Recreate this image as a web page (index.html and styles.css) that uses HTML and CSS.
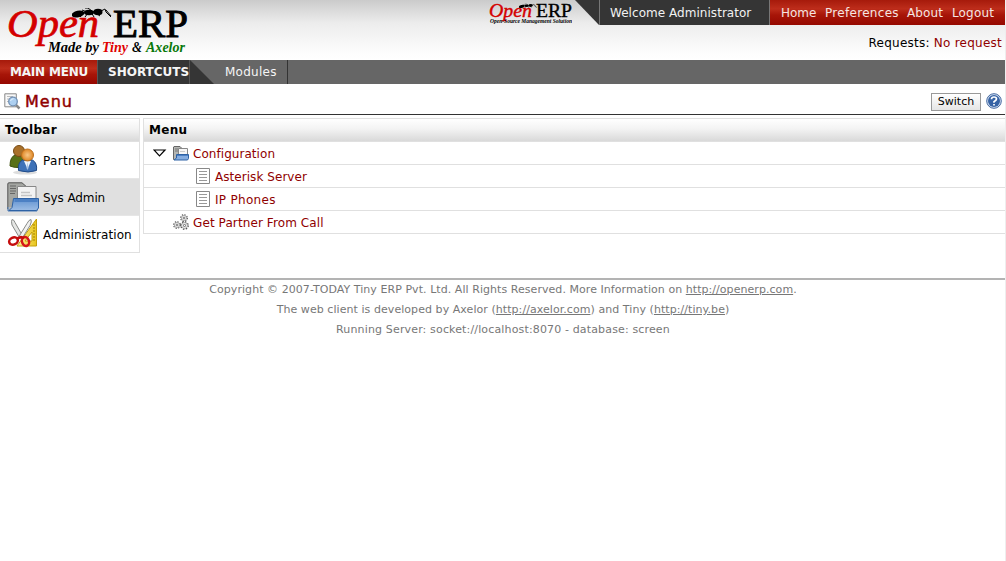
FILE: index.html
```
<!DOCTYPE html>
<html lang="en">
<head>
<meta charset="utf-8">
<title>Menu</title>
<link rel="stylesheet" href="styles.css">
</head>
<body>
<svg class="defs" width="0" height="0" aria-hidden="true">
  <defs>
    <linearGradient id="blue" x1="0" y1="0" x2="0" y2="1"><stop offset="0" stop-color="#5f91d0"/><stop offset="1" stop-color="#9dbde5"/></linearGradient>
    <radialGradient id="orange"><stop offset="0" stop-color="#f9c987"/><stop offset="1" stop-color="#dd8625"/></radialGradient>
    <linearGradient id="yellow"><stop offset="0" stop-color="#fff0a0"/><stop offset="1" stop-color="#e8c51b"/></linearGradient>
    <symbol id="ant" viewBox="0 0 40 10">
      <ellipse cx="6" cy="6" rx="6.500" ry="3.300" transform="rotate(-12 6 6)"/>
      <ellipse cx="17" cy="4.500" rx="5" ry="2.700"/><ellipse cx="26" cy="4" rx="4.500" ry="3.200"/>
      <path d="M12 5 8 9M16 5l-3 4M19 4l3 5M21 3l7 5M15 4l-5-2M20 3l-4-3h-3M29 3l4-2 1 3 5 5M34 2l5 6" fill="none" stroke="#000" stroke-width="1"/>
    </symbol>
    <symbol id="folder" viewBox="0 0 32 30">
      <path d="M.8 27V2q0-1.200 1.200-1.200H15l4 3.500V27z" fill="#a4a6a2" stroke="#555"/>
      <path d="M3 4h6M3 6.500h6M3 9h6M3 11.500h5" stroke="#666"/>
      <path d="M10.500 20V4.500H29V20z" fill="#f3f3f3" stroke="#888"/>
      <path d="M14 10.500h9M14 13.500h11" stroke="#c4c4c4" stroke-width="1.500"/>
      <path d="M1 25v4h29l1-5" fill="#b5b8b8" stroke="#4777b2"/>
      <path d="M6.500 16.500h25V26l-2 2.500H2l3-3z" fill="url(#blue)" stroke="#2e62a5"/>
      <path d="M7.500 18.500h23" stroke="#4c80c4" stroke-width="3"/>
    </symbol>
    <symbol id="folder-small" viewBox="0 0 16 15">
      <path d="M.5 13.500V1L1 .500h6l2 2v11z" fill="#b4b6b3" stroke="#666"/>
      <path d="M2 3h3M2 5h3" stroke="#777"/>
      <path d="M5.500 9V2.500h9V9z" fill="#f6f6f6" stroke="#888"/>
      <path d="M7 5.500h5" stroke="#ccc"/>
      <path d="M3.500 8.500h12v4l-1 1.500H1l2.500-2z" fill="#86ade0" stroke="#2e62a5"/>
      <path d="M4 9.500h11" stroke="#4c80c4"/>
    </symbol>
    <symbol id="sheet" viewBox="0 0 14 16">
      <path d="M.5.500h13v15H.5z" fill="#fff" stroke="#888"/>
      <path d="M3 3.500h8M3 6.500h8M3 9.500h8M3 12.500h8" stroke="#999"/>
    </symbol>
    <symbol id="gear" viewBox="0 0 8 8">
      <circle cx="4" cy="4" r="3.300" fill="none" stroke="#444" stroke-width="1.100" stroke-dasharray="1.300 1.290"/>
      <circle cx="4" cy="4" r="2.600" fill="#fff" stroke="#777" stroke-width=".6"/>
      <circle cx="4" cy="4" r="1" fill="#fff" stroke="#444" stroke-width=".7"/>
    </symbol>
  </defs>
</svg>

<header class="header">
  <svg class="logo" width="190" height="60">
    <text class="logo-red" x="7" y="37" font-size="41" textLength="92" lengthAdjust="spacingAndGlyphs">Open</text>
    <text class="logo-erp" x="113" y="37" font-size="41" textLength="75" lengthAdjust="spacingAndGlyphs">ERP</text>
    <use href="#ant" x="72" y="8" width="40" height="10"/>
    <g class="logo-line" font-size="14">
      <text x="48" y="52" textLength="51" lengthAdjust="spacingAndGlyphs">Made by</text>
      <text x="102" y="52" fill="#e00000" textLength="26" lengthAdjust="spacingAndGlyphs">Tiny</text>
      <text x="132" y="52" textLength="10" lengthAdjust="spacingAndGlyphs">&amp;</text>
      <text x="146" y="52" fill="#087808" textLength="39" lengthAdjust="spacingAndGlyphs">Axelor</text>
    </g>
  </svg>
  <div class="header-right">
    <div class="userbar">
      <svg class="mini-logo" width="86" height="25">
        <text class="logo-red" x="3" y="17" font-size="19.500" textLength="43" lengthAdjust="spacingAndGlyphs">Open</text>
        <text class="logo-erp" x="50" y="17" font-size="19.500" textLength="36" lengthAdjust="spacingAndGlyphs">ERP</text>
        <use href="#ant" x="33" y="3.500" width="18" height="5"/>
        <text class="logo-line" x="4" y="22.500" font-size="5.500" textLength="82" lengthAdjust="spacingAndGlyphs">Open-Source Management Solution</text>
      </svg>
      <svg class="slant" width="24" height="25"><path d="M0 0h24v25z" fill="#353535"/></svg>
      <div class="welcome"><span>Welcome Administrator</span></div>
      <nav class="links"><a class="l-home">Home</a><a class="l-pref">Preferences</a><a class="l-about">About</a><a class="l-out">Logout</a></nav>
    </div>
    <div class="requests"><span>Requests: <a>No request</a></span></div>
  </div>
</header>

<nav class="menubar">
  <a class="main-menu"><span>MAIN MENU</span></a>
  <div class="shortcuts"><span>SHORTCUTS</span></div>
  <svg width="24" height="24"><path d="M0 0 24 24H0z" fill="#353535"/></svg>
  <a class="modules"><span>Modules</span></a>
</nav>

<div class="titlebar">
  <svg class="title-icon" width="17" height="17">
    <path d="M.8.800h11.500v13H.8z" fill="#f8f8f8" stroke="#888"/>
    <path d="M3 3.500h6M3 6h3M3 8.500h2" stroke="#bbb"/>
    <path d="m12 12 3.500 3.500" stroke="#888" stroke-width="2.500"/>
    <circle cx="9" cy="8.500" r="4.300" fill="#add0f1" stroke="#7190b4" stroke-width="1.300"/>
    <path d="M6.500 8q.5-2 3-2.300" fill="none" stroke="#e6f3ff"/>
  </svg>
  <h1>Menu</h1>
  <button class="switch">Switch</button>
  <svg class="help" width="16" height="16">
    <circle cx="8" cy="8" r="7.300" fill="#d6e2f3" stroke="#4569a0"/>
    <circle cx="8" cy="8" r="6" fill="#3663a5"/>
    <path d="M5.500 6.200Q5.500 4 8 4t2.500 2Q10.500 7.200 8 8.700v1M8 11v1.600" fill="none" stroke="#fff" stroke-width="1.700"/>
  </svg>
</div>

<main class="content">
  <section class="panel toolbar">
    <h2><span>Toolbar</span></h2>
    <a class="tool">
      <svg width="32" height="32">
        <ellipse cx="18" cy="28.500" rx="12" ry="2" fill="#ddd"/>
        <path d="M3 22q0-9 5-11h8q5 2 5 8v3Q10 25 3 22z" fill="#587018" stroke="#3d500c"/>
        <circle cx="12" cy="7" r="5.500" fill="#a9712b" stroke="#774b15"/>
        <path d="M11.500 26.500q-1-8 4-10.500h10q5 3 4 10.500-8 3-18 0z" fill="#3e72b8" stroke="#204a87"/>
        <path d="m17 17 3.500 8 3.500-8z" fill="#eef4fc"/><path d="m20.500 18-1 6 1 2 1-2z" fill="#a8c3e4"/>
        <circle cx="20.500" cy="11" r="6" fill="url(#orange)" stroke="#bd701d"/>
      </svg><span class="t-partners">Partners</span>
    </a>
    <a class="tool selected"><svg width="32" height="32" viewBox="0 -1 32 32"><use href="#folder" width="32" height="30"/></svg><span class="t-sys">Sys Admin</span></a>
    <a class="tool">
      <svg width="32" height="32">
        <path d="M29.500 1v27H10z" fill="url(#yellow)" stroke="#c49f0a"/>
        <path d="M25 14v9h-7z" fill="#fff" stroke="#c49f0a"/>
        <path d="M28 7h-2m2 3h-2m2 3h-2m2 3h-2m2 3h-2m2 3h-2" stroke="#a18100"/>
        <path d="M5 1.500q2 0 3 3l8 14-3 2L5 7Q4 3 5 1.500z" fill="#e5e6e4" stroke="#878987"/>
        <path d="M24 1.500q-2 0-4 4l-8 13 3 2 8-13q2-4 1-6z" fill="#f1f1f0" stroke="#878987"/>
        <ellipse cx="6.500" cy="23" rx="4.500" ry="3.500" transform="rotate(-25 6.500 23)" fill="none" stroke="#c50d0d" stroke-width="2.500"/>
        <ellipse cx="18.500" cy="23.500" rx="3.500" ry="4.500" transform="rotate(-20 18.500 23.500)" fill="none" stroke="#d51717" stroke-width="2.500"/>
        <path d="m10 20.500 4-1.500 3 1" fill="none" stroke="#c50d0d" stroke-width="2.500"/>
      </svg><span class="t-admin">Administration</span>
    </a>
  </section>

  <section class="panel tree">
    <h2><span>Menu</span></h2>
    <div class="row"><svg class="arrow" width="14" height="8"><path d="M1 1h11L6.500 6.800z" fill="#fff" stroke="#000" stroke-width="1.200"/></svg><svg class="small-folder" width="16" height="15"><use href="#folder-small" width="16" height="15"/></svg><a>Configuration</a></div>
    <div class="row child"><svg width="14" height="16"><use href="#sheet" width="14" height="16"/></svg><a>Asterisk Server</a></div>
    <div class="row child"><svg width="14" height="16"><use href="#sheet" width="14" height="16"/></svg><a class="t-phones">IP Phones</a></div>
    <div class="row action"><svg width="16" height="16"><use href="#gear" x="7" width="8" height="8"/><use href="#gear" y="7" width="8" height="8"/><use href="#gear" x="7" y="7" width="9" height="9"/></svg><a class="t-call">Get Partner From Call</a></div>
  </section>
</main>

<footer class="footer">
  <p class="f1"><span>Copyright © 2007-TODAY Tiny ERP Pvt. Ltd. All Rights Reserved. More Information on <a>http://openerp.com</a>.</span></p>
  <p class="f2"><span>The web client is developed by Axelor (<a>http://axelor.com</a>) and Tiny (<a>http://tiny.be</a>)</span></p>
  <p class="f3"><span>Running Server: socket://localhost:8070 - database: screen</span></p>
</footer>
</body>
</html>
```
FILE: styles.css
```
* { box-sizing: border-box; }
body { margin: 0; width: 1006px; height: 561px; overflow: hidden; background: #fff; color: #000; border-right: 1px solid #eee; font: 12px/16px "DejaVu Sans", sans-serif; }
svg { display: block; flex: none; }
span, a { white-space: nowrap; }
.defs { position: absolute; }
.header { width: 1006px; height: 60px; display: flex; justify-content: space-between; background: linear-gradient(#cbcbcb, #ececec 38%, #fcfcfc 85%, #fff); }
.logo-red { font-family: "Liberation Serif", serif; font-style: italic; fill: #d40000; stroke: #d40000; stroke-width: .7px; }
.logo-erp { font-family: "Liberation Serif", serif; stroke: #000; stroke-width: 1px; }
.mini-logo .logo-red, .mini-logo .logo-erp { stroke-width: .4px; }
.logo-line { font-family: "Liberation Serif", serif; font-style: italic; font-weight: bold; }
.userbar { display: flex; height: 25px; }
.mini-logo { margin-right: 3px; }
.welcome { width: 171px; padding: 5px 0 0 10px; background: #353535; border-left: 1px solid #777; border-right: 1px solid #777; color: #f2f2f2; letter-spacing: .04px; }
.links { width: 236px; display: flex; padding: 5px 0 0 11px; background: linear-gradient(#a61a0b, #bd2d1b 35%, #a71508 60%, #950800); color: #f5e5e2; }
.l-home { width: 44px; }
.l-pref { width: 82px; letter-spacing: .3px; }
.l-about { width: 45px; letter-spacing: .1px; }
.l-out { letter-spacing: .15px; }
.requests { text-align: right; padding: 10px 4px 0 0; letter-spacing: .24px; }
.requests a { color: #900000; }
.menubar { width: 1006px; height: 24px; display: flex; background: #666; color: #f5f5f5; line-height: 24px; }
.main-menu { width: 98px; padding-left: 10px; background: linear-gradient(#a61a0b, #bd2d1b 35%, #a71508 60%, #950800); border-right: 1px solid #555; font-weight: bold; letter-spacing: -.2px; }
.shortcuts { width: 92px; padding-left: 10px; background: #353535; border-right: 1px solid #555; font-weight: bold; }
.modules { width: 74px; padding-left: 11px; border-right: 1px solid #333; letter-spacing: .25px; }
.titlebar { height: 31px; display: flex; align-items: flex-start; border-bottom: 1px solid #333; padding: 9px 3px 0 4px; }
h1 { margin: 0 auto 0 4px; color: #900000; font-size: 16px; line-height: 17px; font-weight: normal; -webkit-text-stroke: .45px #900000; letter-spacing: 1px; }
.switch { width: 50px; height: 18px; margin-right: 5px; padding: 0; border: 1px solid #999; background: linear-gradient(#fff, #e5e5e5); font: 11px/14px "DejaVu Sans", sans-serif; color: #000; }
.content { display: flex; gap: 3px; padding-top: 3px; align-items: flex-start; }
.panel { border: 1px solid #e0e0e0; }
.toolbar { width: 140px; border-left: 0; }
.tree { flex: 1; border-right: 0; }
h2 { margin: 0; height: 23px; padding-left: 5px; font-size: 12px; line-height: 22px; letter-spacing: .3px; background: linear-gradient(#fff, #f3f3f3 45%, #d9d9d9); border-bottom: 1px solid #e0e0e0; }
.tool { height: 37px; display: flex; align-items: center; padding-left: 7px; gap: 4px; border-bottom: 1px solid #e6e6e6; }
.tool span { padding-top: 1px; }
.tool:last-child { height: 36px; border-bottom: 0; }
.t-partners { letter-spacing: .35px; }
.t-sys { letter-spacing: -.1px; }
.t-admin { letter-spacing: .07px; }
.selected { background: #e0e0e0; }
.row { height: 23px; display: flex; align-items: center; padding-left: 9px; border-bottom: 1px solid #e0e0e0; color: #900000; letter-spacing: .05px; }
.row a { padding-top: 2px; }
.row:last-child { height: 22px; border-bottom: 0; }
.small-folder { margin: 0 4px 0 6px; }
.child { padding-left: 52px; gap: 5px; }
.t-phones { letter-spacing: .3px; }
.t-call { letter-spacing: .1px; }
.action { padding-left: 29px; gap: 4px; }
.footer { width: 1006px; margin-top: 25px; border-top: 2px solid #b3b3b3; color: #777; font-size: 11px; line-height: 20px; text-align: center; }
.footer p { margin: 0; }
.footer a { text-decoration: underline; }
.f1 { letter-spacing: .055px; }
.f2 { letter-spacing: .06px; }
.f3 { letter-spacing: .15px; }
```
